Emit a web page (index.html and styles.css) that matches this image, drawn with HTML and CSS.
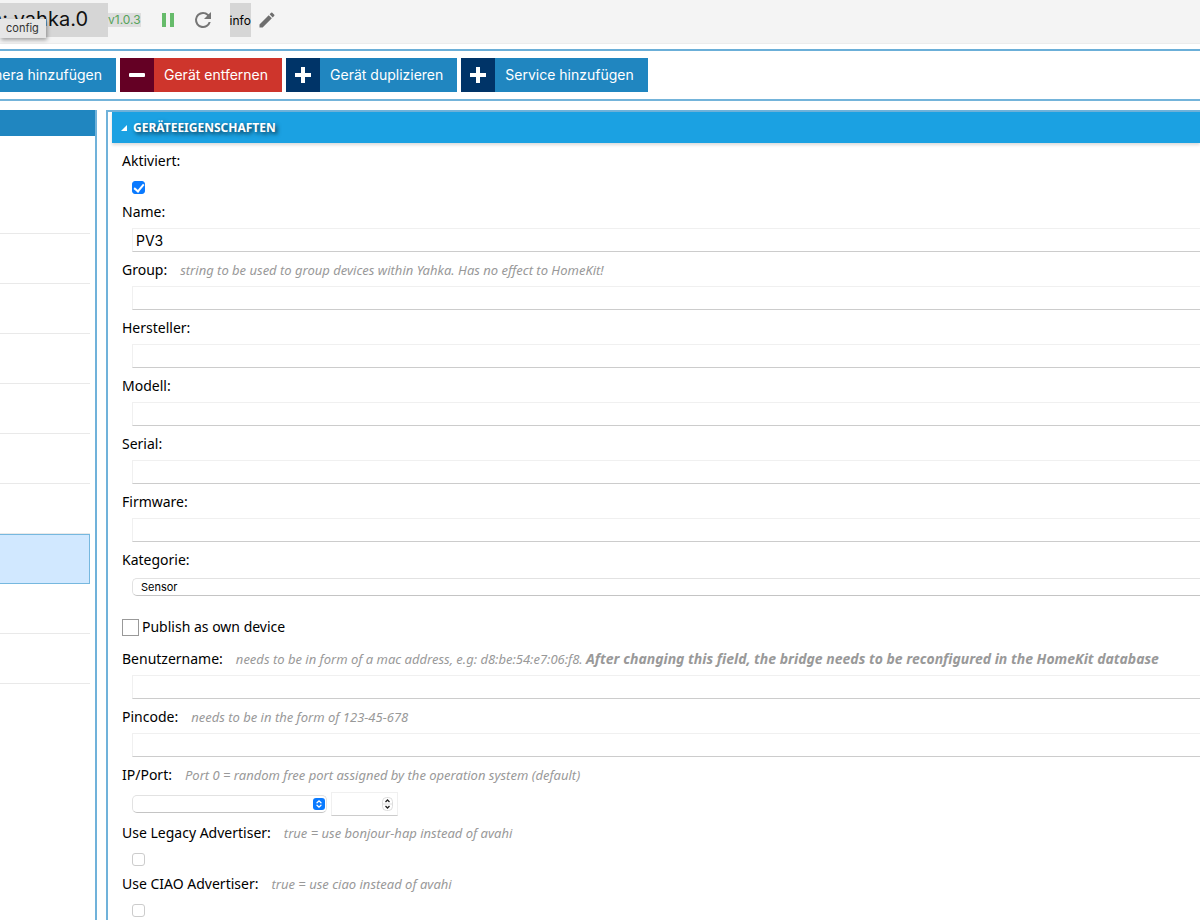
FILE: index.html
```html
<!DOCTYPE html>
<html lang="de">
<head>
<meta charset="utf-8">
<title>yahka.0</title>
<link rel="stylesheet" href="styles.css">
</head>
<body>
<header class="appbar">
  <h1 class="title">n: yahka.0</h1>
  <span class="tooltip" role="tooltip">config</span>
  <span class="version">v1.0.3</span>
  <button class="icon-button pause" aria-label="Pause"><svg width="14" height="14" viewBox="0 0 14 14" fill="#66bb6a"><path d="M1 0h4v14H1zM9 0h4v14H9z"/></svg></button>
  <button class="icon-button reload" aria-label="Reload"><svg width="24" height="24" viewBox="0 0 24 24" fill="#757575"><path d="M17.65 6.35A7.96 7.96 0 0 0 12 4a8 8 0 1 0 7.73 10h-2.08A6 6 0 1 1 12 6c1.66 0 3.14.69 4.22 1.78L13 11h7V4z"/></svg></button>
  <span class="info">info</span>
  <button class="icon-button edit" aria-label="Edit"><svg width="20" height="20" viewBox="0 0 24 24" fill="#6e6e6e"><path d="M3 17.25V21h3.75L17.81 9.94l-3.75-3.75zM20.71 7.04a1 1 0 0 0 0-1.41l-2.34-2.34a1 1 0 0 0-1.41 0l-1.83 1.83 3.75 3.75z"/></svg></button>
</header>
<nav class="toolbar">
  <div class="first-action"><button class="action"><span class="label">Kamera hinzufügen</span></button></div>
  <button class="action danger"><span class="sign"><svg width="18" height="18" viewBox="0 0 18 18" fill="#fff"><rect x="1" y="7" width="16" height="4" rx="1"/></svg></span><span class="label">Gerät entfernen</span></button>
  <button class="action"><span class="sign"><svg width="18" height="18" viewBox="0 0 18 18" fill="#fff"><path d="M7 1h4v6h6v4h-6v6H7v-6H1V7h6z"/></svg></span><span class="label">Gerät duplizieren</span></button>
  <button class="action"><span class="sign"><svg width="18" height="18" viewBox="0 0 18 18" fill="#fff"><path d="M7 1h4v6h6v4h-6v6H7v-6H1V7h6z"/></svg></span><span class="label">Service hinzufügen</span></button>
</nav>
<main class="content">
  <aside class="devices">
    <div class="devices-head"></div>
    <ul class="device-list">
      <li class="device first"></li><li class="device"></li><li class="device"></li><li class="device"></li><li class="device"></li><li class="device"></li><li class="device"></li><li class="device"></li><li class="device selected"></li><li class="device"></li><li class="device"></li>
    </ul>
  </aside>
  <section class="panel">
    <h2 class="panel-head"><svg width="6" height="6" viewBox="0 0 6 6" fill="#fff"><path d="M6 0v6H0z"/></svg>Geräteeigenschaften</h2>
    <form class="form">
      <div class="field"><div class="caption"><label for="on">Aktiviert:</label></div><div class="tick"><input class="check" type="checkbox" id="on" checked></div></div>
      <div class="field"><div class="caption"><label for="name">Name:</label></div><input class="text" id="name" value="PV3"></div>
      <div class="field"><div class="caption"><label for="group">Group:</label><span class="hint">string to be used to group devices within Yahka. Has no effect to HomeKit!</span></div><input class="text" id="group"></div>
      <div class="field"><div class="caption"><label for="maker">Hersteller:</label></div><input class="text" id="maker"></div>
      <div class="field"><div class="caption"><label for="model">Modell:</label></div><input class="text" id="model"></div>
      <div class="field"><div class="caption"><label for="serial">Serial:</label></div><input class="text" id="serial"></div>
      <div class="field"><div class="caption"><label for="firmware">Firmware:</label></div><input class="text" id="firmware"></div>
      <div class="field"><div class="caption"><label for="category">Kategorie:</label></div><div class="controls"><select class="select wide" id="category"><option>Sensor</option></select></div></div>
      <div class="publish"><input class="check square" type="checkbox" id="publish"><label for="publish">Publish as own device</label></div>
      <div class="field"><div class="caption"><label for="user">Benutzername:</label><span class="hint">needs to be in form of a mac address, e.g: d8:be:54:e7:06:f8. <b class="warning">After changing this field, the bridge needs to be reconfigured in the HomeKit database</b></span></div><input class="text" id="user"></div>
      <div class="field"><div class="caption"><label for="pin">Pincode:</label><span class="hint">needs to be in the form of 123-45-678</span></div><input class="text" id="pin"></div>
      <div class="field"><div class="caption"><label for="ip">IP/Port:</label><span class="hint">Port 0 = random free port assigned by the operation system (default)</span></div>
        <div class="controls address">
          <div class="picker"><select class="select" id="ip"><option></option></select><svg class="arrows" width="12" height="12" viewBox="0 0 12 12"><rect width="12" height="12" rx="3" fill="#0a7aff"/><path d="M4 4.8l2-2 2 2M4 7.2l2 2 2-2" fill="none" stroke="#fff" stroke-width="1.3" stroke-linecap="round"/></svg></div>
          <div class="picker port"><input class="text" type="number" aria-label="Port"><svg class="arrows" width="11" height="14" viewBox="0 0 11 14"><rect x=".5" y=".5" width="10" height="13" rx="4" fill="#fff" stroke="#ddd"/><path d="M1 7h9" stroke="#ddd"/><path d="M3.5 5l2-2 2 2M3.5 9l2 2 2-2" fill="none" stroke="#222" stroke-width="1.3"/></svg></div>
        </div></div>
      <div class="field"><div class="caption"><label for="legacy">Use Legacy Advertiser:</label><span class="hint">true = use bonjour-hap instead of avahi</span></div><div class="tick"><input class="check" type="checkbox" id="legacy"></div></div>
      <div class="field"><div class="caption"><label for="ciao">Use CIAO Advertiser:</label><span class="hint">true = use ciao instead of avahi</span></div><div class="tick"><input class="check" type="checkbox" id="ciao"></div></div>
    </form>
  </section>
</main>
</body>
</html>
```
FILE: styles.css
```css
* { box-sizing: border-box; }
body { margin: 0; height: 100vh; overflow: hidden; display: flex; flex-direction: column; background: #fff; color: #000; font: 14px/20px "Noto Sans", sans-serif; }
button { border: 0; padding: 0; margin: 0; font: inherit; cursor: pointer; }
svg { display: block; flex: none; }

.appbar { position: relative; flex: none; display: flex; align-items: center; height: 44px; padding-bottom: 4px; background: #f4f4f4; border-bottom: 1px solid #ececec; font-family: Inter, sans-serif; }
.title { display: flex; justify-content: flex-end; width: 108px; height: 34px; margin: 0; padding-right: 20px; overflow: hidden; background: #d6d6d6; color: #111; font-size: 20px; line-height: 32px; font-weight: 400; white-space: nowrap; }
.tooltip { position: absolute; left: 0; top: 19px; padding: 0 7px 0 6px; background: #e6e6e6; color: #333; font-size: 11px; line-height: 19px; box-shadow: 1px 2px 4px rgba(0, 0, 0, .35); }
.version { background: #dedede; color: #55a35a; font-size: 12px; line-height: 14px; }
.icon-button { background: none; }
.pause { margin-left: 20px; }
.reload { margin-left: 16px; }
.info { height: 34px; margin-left: 15px; background: #d6d6d6; font-size: 12px; line-height: 36px; }
.edit { margin-left: 6px; }

.toolbar { flex: none; display: flex; gap: 4px; margin-top: 5px; padding: 7px 0; border-top: 2px solid #6bafd8; border-bottom: 2px solid #74b4da; }
.first-action { flex: none; display: flex; justify-content: flex-end; width: 116px; overflow: hidden; }
.action { flex: none; display: flex; align-items: center; height: 34px; background: #2086c0; color: #fff; font: 14px/34px Inter, sans-serif; white-space: nowrap; }
.sign { display: grid; place-items: center; width: 34px; height: 34px; background: #003468; }
.label { padding: 0 14px 0 10px; }
.danger { background: #ce352c; }
.danger .sign { background: #640024; }

.content { flex: 1; display: flex; gap: 9px; min-height: 0; margin-top: 9px; }
.devices { flex: none; width: 97px; border-right: 2px solid #70b2da; }
.devices-head { height: 26px; background: #2086c0; }
.device-list { margin: 0; padding: 0 5px 0 0; list-style: none; }
.device { height: 50px; border-bottom: 1px solid #e9e9e9; }
.device.first { height: 48px; border: 0; }
.device.selected { background: #d1e8ff; border: 1px solid #76b8df; border-left: 0; }

.panel { flex: 1; min-width: 0; padding-left: 4px; border-left: 2px solid #70b2da; border-top: 2px solid #70b2da; }
.panel-head { display: flex; align-items: center; gap: 6px; height: 31px; margin: 0; padding-left: 9px; background: #1ba1e2; color: #fff; font-size: 12px; font-weight: 700; text-transform: uppercase; text-shadow: 2px 2px 4px rgba(0, 0, 0, .7); box-shadow: 0 2px 3px rgba(0, 0, 0, .15); }
.form { margin: 0; padding: 8px 0 0 10px; }
.caption { display: flex; height: 20px; gap: 13px; white-space: nowrap; }
.hint { color: #999; font-size: 13px; font-style: italic; }
.warning { font-size: 14px; }
.text { display: block; width: calc(100% - 10px); height: 24px; margin: 6px 0 8px 10px; padding: 0 3px; border: 1px solid #f0f0f0; border-right: 0; border-bottom-color: #ccc; background: #fff; font: 14px/22px Inter, sans-serif; outline: 0; }
.controls { display: flex; align-items: center; gap: 4px; height: 38px; padding: 0 0 4px 10px; }
.controls.address { padding: 0 0 0 10px; }
.select { display: block; width: 100%; height: 18px; padding: 0 8px; appearance: none; border: 1px solid #e2e2e2; border-bottom-color: #c4c4c4; border-radius: 5px; background: #fff; color: #000; font: 11px/15px Inter, sans-serif; }
.select.wide { border-right: 0; border-radius: 5px 0 0 5px; }
.tick { display: flex; align-items: center; height: 31px; padding: 2px 0 0 10px; }
.check { appearance: none; flex: none; width: 13px; height: 13px; margin: 0; border: 1px solid #ccc; border-radius: 3px; background: #fff; }
.check:checked { border-color: #0a7aff; background: #0a7aff; display: grid; place-items: center; }
.check:checked::before { content: ""; width: 4px; height: 8px; margin-bottom: 2px; border: solid #fff; border-width: 0 2px 2px 0; transform: rotate(40deg); }
.check.square { width: 17px; height: 17px; border-color: #999; border-radius: 0; }
.publish { display: flex; align-items: center; gap: 3px; height: 38px; margin-bottom: 3px; }
.picker { position: relative; width: 195px; }
.picker .arrows { position: absolute; right: 2px; top: 3px; pointer-events: none; }
.port { width: 67px; }
.port .text { width: 100%; margin: 0; border-right: 1px solid #f0f0f0; appearance: textfield; }
.port .arrows { right: 5px; top: 5px; }
```
